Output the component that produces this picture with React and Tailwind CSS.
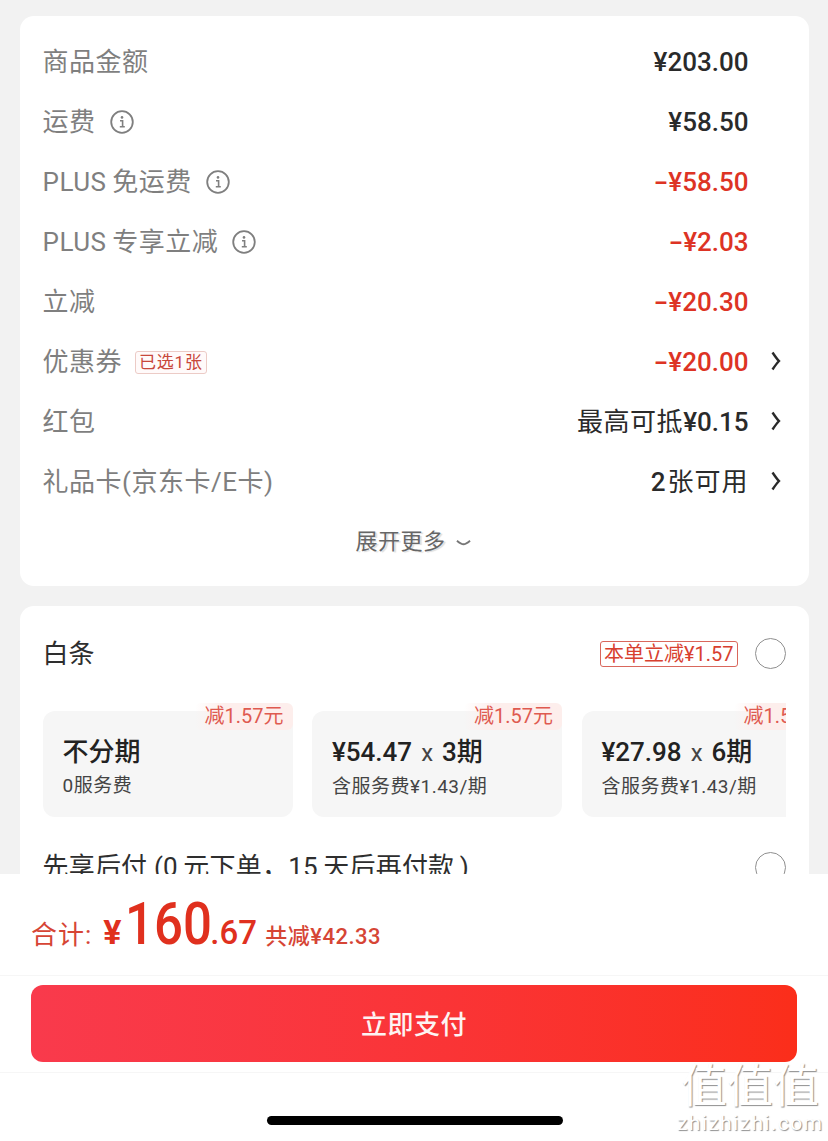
const font = '[font-family:Roboto,"Noto_Sans_CJK_SC",sans-serif]';

const rows = [
  { label: '商品金额', value: '¥203.00' },
  { label: '运费', info: true, value: '¥58.50' },
  { label: 'PLUS\u2009免运费', info: true, value: '¥58.50', minus: true },
  { label: 'PLUS\u2009专享立减', info: true, value: '¥2.03', minus: true },
  { label: '立减', value: '¥20.30', minus: true },
  { label: '优惠券', tag: '已选1张', value: '¥20.00', minus: true, arrow: true },
  { label: '红包', note: '最高可抵', value: '¥0.15', arrow: true },
  { label: '礼品卡(京东卡/E卡)', value: '2', note2: '张可用', arrow: true },
];

const plans = [
  { title: '不分期', sub: '0服务费' },
  { amount: '¥54.47', terms: '3期', sub: '含服务费¥1.43/期' },
  { amount: '¥27.98', terms: '6期', sub: '含服务费¥1.43/期' },
];

function InfoIcon() {
  return (
    <svg width="24" height="24" viewBox="0 0 24 24" fill="none" className="shrink-0">
      <circle cx="12" cy="12" r="10.8" stroke="#7f7f7f" strokeWidth="1.8" />
      <circle cx="12" cy="7.4" r="1.3" fill="#7f7f7f" />
      <path d="M10 10.7h2.6v6M9.8 16.8h5" stroke="#7f7f7f" strokeWidth="1.6" />
    </svg>
  );
}

function Arrow() {
  return (
    <svg width="10" height="20" viewBox="0 0 10 20" fill="none" className="mt-[-2px]">
      <path d="M1.500 1.500c2 3 4 6 6.500 8.500-2.500 2.500-4.500 5.500-6.500 8.500" stroke="#2a2a2a" strokeWidth="2.400" />
    </svg>
  );
}

function Radio() {
  return <div className="h-[31px] w-[31px] shrink-0 rounded-full border border-[#8f8f8f]" />;
}

function FeeRow({ row }) {
  return (
    <div className="flex h-[60px] items-center">
      <div className="flex flex-1 items-center text-[26px] tracking-[0.5px] text-[#7f7f7f]">
        <span>{row.label}</span>
        {row.info && <span className="ml-[14px]"><InfoIcon /></span>}
        {row.tag && (
          <span className="ml-[13px] rounded-[3px] border border-[#eccbc6] bg-[#fffafa] px-[3px] text-[17px] leading-[21px] tracking-[0.8px] text-[#c8473b]">
            {row.tag}
          </span>
        )}
      </div>
      <span className={`text-[26px] ${row.minus ? 'text-[#dd3324]' : 'text-[#2a2a2a]'}`}>
        {row.minus && <span className="inline-block w-[14px] origin-center scale-x-[1.6] text-center font-medium">-</span>}
        {row.note && <span className="tracking-[0.5px]">{row.note}</span>}
        <span className="font-medium">{row.value}</span>
        {row.note2 && <span className="ml-[2px] tracking-[1px]">{row.note2}</span>}
      </span>
      <div className="flex w-[38px] justify-start pl-[22px]">
        {row.arrow && <Arrow />}
      </div>
    </div>
  );
}

function PlanCard({ plan }) {
  return (
    <div className="relative h-[106px] w-[250px] shrink-0 rounded-xl bg-[#f6f6f6] pl-5 pt-[24px]">
      <div className="text-[26px] font-medium leading-[34px] text-[#222222]">
        {plan.title}
        {plan.amount && (
          <>
            {plan.amount}
            <span className="mx-[9px] text-[24px] font-normal text-[#444444]">x</span>
            {plan.terms}
          </>
        )}
      </div>
      <div className="mt-[4px] text-[19px] leading-[26px] tracking-[0.5px] text-[#444444]">{plan.sub}</div>
      <span className="absolute right-0 top-[-8px] rounded-[6px] bg-gradient-to-l from-[#fdeeec] from-70% to-transparent pl-[10px] pr-[9px] text-[20px] leading-[27px] text-[#df5a50]">
        减1.57元
      </span>
    </div>
  );
}

export default function App() {
  return (
    <div className={`relative flex h-[1141px] w-[828px] flex-col overflow-hidden bg-[#f2f2f2] ${font}`}>
      <div className="h-[874px] shrink-0 overflow-hidden px-[19.5px] pt-4">
        <section className="h-[570px] rounded-[14px] bg-white pl-[23px] pr-[22px] pt-4">
          {rows.map((row) => (
            <FeeRow key={row.label} row={row} />
          ))}
          <div className="relative flex h-[58px] items-center justify-center pr-[3px]">
            <span className="text-[22px] tracking-[0.5px] text-[#666666] [text-shadow:-3px_0_0_#ffffff,2px_1px_1px_#dddddd]">展开更多</span>
            <svg width="15" height="8" viewBox="0 0 16 8" fill="none" className="ml-[10px] mt-1">
              <path d="M1 1.500c3 2.500 5 3.800 7 3.800s4-1.300 7-3.800" stroke="#777777" strokeWidth="2" />
            </svg>
          </div>
        </section>

        <section className="mt-5 h-[400px] rounded-[14px] bg-white px-[23px] pt-[32px]">
          <div className="flex h-[31px] items-center">
            <span className="mt-[2px] flex-1 text-[26px] text-[#2e2e2e]">白条</span>
            <span className="mr-[17px] rounded-[3px] border border-[#d9675c] px-[3px] text-[20px] leading-[24px] text-[#d8402f]">
              本单立减¥1.57
            </span>
            <Radio />
          </div>
          <div className="mt-[34px] flex gap-[19.5px] overflow-hidden pt-[8px]">
            {plans.map((plan) => (
              <PlanCard key={plan.sub + (plan.amount || '')} plan={plan} />
            ))}
          </div>
          <div className="mt-[35px] flex h-[31px] items-center">
            <span className="flex-1 text-[26px] tracking-[0.2px] text-[#2e2e2e]">先享后付 (0&thinsp;元下单，15&thinsp;天后再付款&thinsp;)</span>
            <Radio />
          </div>
        </section>
      </div>

      <footer className="flex-1 bg-white">
        <div className="flex h-[102px] items-baseline border-b border-[#f6f6f6] pl-[31px] pt-[15px] text-[#e0301e]">
          <span className="text-[26px] tracking-[1px] text-[#d64535]">合计:</span>
          <span className="ml-[11px] w-[22px] text-[34px] font-bold">¥</span>
          <span className="inline-block w-[85px] origin-left scale-x-[0.85] text-[60px] font-medium leading-[70px]">160</span>
          <span className="w-[45px] text-[33px] font-medium">.67</span>
          <span className="ml-[10px] text-[22px] font-medium tracking-[0.5px] text-[#d64535]">共减¥42.33</span>
        </div>
        <div className="border-b border-[#f6f6f6] px-[31px] pb-[10px] pt-[9px]">
          <button className="h-[77px] w-[766px] rounded-xl bg-gradient-to-r from-[#f93a4c] to-[#fb2e1a] pt-[3px] text-[26px] font-medium tracking-[0.5px] text-[#fdf3f2]">
            立即支付
          </button>
        </div>
        <div className="flex justify-center pl-[1px] pt-[43px]">
          <div className="h-[9px] w-[296px] rounded-full bg-black" />
        </div>
      </footer>

      {/* watermark */}
      <div className="absolute left-[677px] top-[1061px] w-[146px] text-center text-white [text-shadow:1px_1px_1px_#8f8f8f]">
        <div className="text-[46px] leading-[50px]">值值值</div>
        <div className="text-[21px] leading-[24px] tracking-[1.4px]">zhizhizhi.com</div>
      </div>
    </div>
  );
}
